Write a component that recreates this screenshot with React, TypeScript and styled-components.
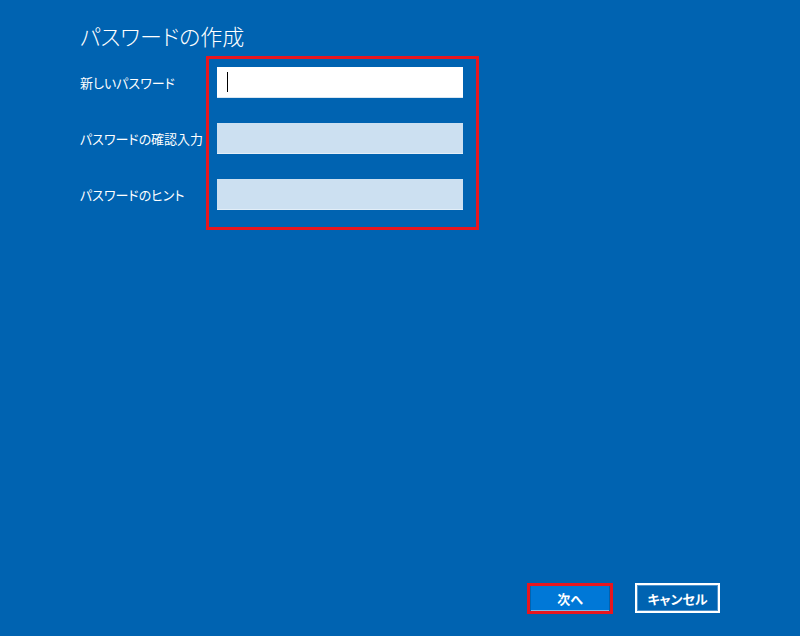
import styled, { createGlobalStyle } from "styled-components"

const GlobalStyle = createGlobalStyle`
  html, body {
    margin: 0;
    padding: 0;
    background: #0063b1;
  }
  * {
    box-sizing: border-box;
  }
`

const Page = styled.div`
  width: 800px;
  height: 636px;
  display: flex;
  flex-direction: column;
  padding: 19px 80px 22px 80px;
  background: #0063b1;
  color: #ffffff;
  font-family: "Noto Sans CJK JP", "Noto Sans", sans-serif;
  font-feature-settings: "palt";
`

const Title = styled.h1`
  margin: 0;
  font-size: 22px;
  font-weight: 300;
  line-height: 32px;
`

const Form = styled.div`
  display: flex;
  margin-top: 5px;
`

const Labels = styled.div`
  width: 126px;
  display: flex;
  flex-direction: column;
  gap: 25px;
  padding-top: 11px;
`

const Label = styled.div`
  height: 31px;
  display: flex;
  align-items: center;
  font-size: 13px;
  white-space: nowrap;
`

const Highlight = styled.div`
  border: 3px solid #e8161e;
`

const Fields = styled(Highlight)`
  width: 273px;
  display: flex;
  flex-direction: column;
  gap: 25px;
  padding: 8px 13px 17px 8px;
`

interface FieldProps {
  active?: boolean;
}

const Field = styled.div<FieldProps>`
  height: 31px;
  display: flex;
  align-items: center;
  padding-left: 10px;
  background: ${props => (props.active ? '#ffffff' : '#cce0f1')};
  border-bottom: 1px solid ${props => (props.active ? '#d8e6f2' : '#e2eef8')};
`

const Caret = styled.span`
  width: 1px;
  height: 20px;
  background: #000000;
`

const Footer = styled.div`
  margin-top: auto;
  display: flex;
  justify-content: flex-end;
  align-items: flex-start;
  gap: 22px;
`

const NextFrame = styled(Highlight)`
  width: 86px;
  height: 31px;
  display: flex;
`

const Button = styled.button`
  font-family: "Noto Sans CJK JP", "Noto Sans", sans-serif;
  font-feature-settings: "palt";
  font-size: 13px;
  font-weight: 700;
  color: #ffffff;
  cursor: pointer;
  padding: 0;
`

const PrimaryButton = styled(Button)`
  flex: 1;
  background: #0078d7;
  border: none;
  border-bottom: 1px solid #7fb8e8;
  margin: 0 1px;
`

const SecondaryButton = styled(Button)`
  width: 85px;
  height: 30px;
  background: transparent;
  border: 2px solid #ffffff;
  box-shadow: inset 0 0 0 1px #4d92cc;
`

export default function App() {
  return (
    <>
      <GlobalStyle />
      <Page>
        <Title>パスワードの作成</Title>
        <Form>
          <Labels>
            <Label>新しいパスワード</Label>
            <Label>パスワードの確認入力</Label>
            <Label>パスワードのヒント</Label>
          </Labels>
          <Fields>
            <Field active>
              <Caret />
            </Field>
            <Field />
            <Field />
          </Fields>
        </Form>
        <Footer>
          <NextFrame>
            <PrimaryButton>次へ</PrimaryButton>
          </NextFrame>
          <SecondaryButton>キャンセル</SecondaryButton>
        </Footer>
      </Page>
    </>
  )
}
